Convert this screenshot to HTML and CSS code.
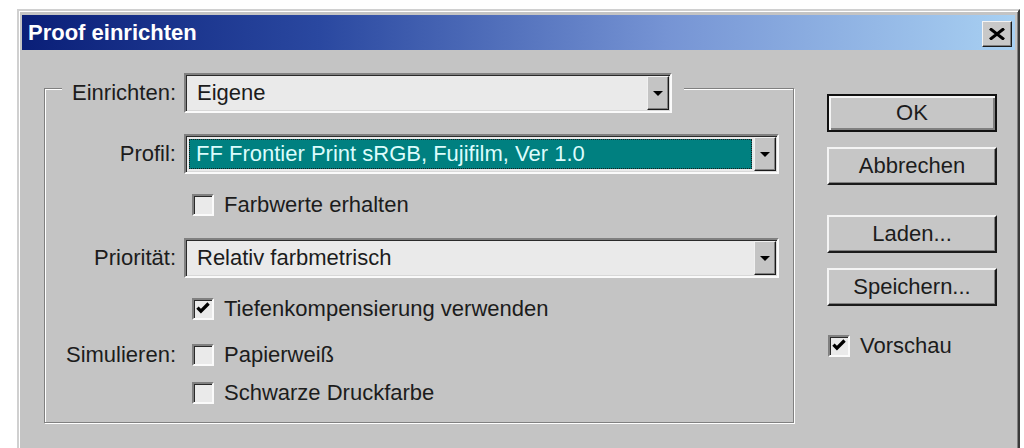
FILE: index.html
```html
<!DOCTYPE html>
<html lang="de">
<head>
<meta charset="utf-8">
<title>Proof einrichten</title>
<link rel="stylesheet" href="styles.css">
</head>
<body>
<div class="dialog">
  <div class="titlebar">
    <span class="title">Proof einrichten</span>
    <div class="close-btn">
      <svg width="18" height="12" viewBox="0 0 18 12"><path d="M2 0.5 L16 11.5 M16 0.5 L2 11.5" stroke="#000" stroke-width="3" fill="none"/></svg>
    </div>
  </div>

  <div class="dialog-body">
    <div class="group">
      <div class="group-head">
        <span class="label head-label">Einrichten:</span>
        <div class="combo combo-head">
          <div class="combo-field"><span class="combo-text">Eigene</span></div>
          <div class="combo-btn"><span class="arrow"></span></div>
        </div>
      </div>

      <div class="grid">
        <span class="label">Profil:</span>
        <div class="combo combo-wide">
          <div class="combo-field is-focused"><span class="combo-sel">FF Frontier Print sRGB, Fujifilm, Ver 1.0</span></div>
          <div class="combo-btn"><span class="arrow"></span></div>
        </div>

        <span></span>
        <div class="check-row">
          <span class="checkbox"></span>
          <span class="check-text">Farbwerte erhalten</span>
        </div>

        <span class="label">Priorität:</span>
        <div class="combo combo-wide">
          <div class="combo-field"><span class="combo-text">Relativ farbmetrisch</span></div>
          <div class="combo-btn"><span class="arrow"></span></div>
        </div>

        <span></span>
        <div class="check-row">
          <span class="checkbox">
            <svg width="18" height="18" viewBox="0 0 13 13"><path d="M2.5 5.5 L5 8 L10.5 2.5" stroke="#000" stroke-width="2.4" fill="none"/></svg>
          </span>
          <span class="check-text">Tiefenkompensierung verwenden</span>
        </div>

        <span class="label">Simulieren:</span>
        <div class="check-row">
          <span class="checkbox"></span>
          <span class="check-text">Papierweiß</span>
        </div>

        <span></span>
        <div class="check-row">
          <span class="checkbox"></span>
          <span class="check-text">Schwarze Druckfarbe</span>
        </div>
      </div>
    </div>

    <div class="side">
      <div class="stack">
        <div class="btn btn-default">OK</div>
        <div class="btn">Abbrechen</div>
      </div>
      <div class="stack">
        <div class="btn">Laden...</div>
        <div class="btn">Speichern...</div>
      </div>
      <div class="check-row side-check">
        <span class="checkbox">
          <svg width="18" height="18" viewBox="0 0 13 13"><path d="M2.5 5.5 L5 8 L10.5 2.5" stroke="#000" stroke-width="2.4" fill="none"/></svg>
        </span>
        <span class="check-text">Vorschau</span>
      </div>
    </div>
  </div>
</div>
</body>
</html>
```

FILE: styles.css
```css
html, body {
  margin: 0;
  padding: 0;
  background: #fff;
  overflow: hidden;
}

body {
  width: 1024px;
  height: 448px;
  font-family: "Liberation Sans", Arial, sans-serif;
  font-size: 22px;
  color: #1c1c1c;
}

/* window frame; its lower edge runs on past the window */
.dialog {
  box-sizing: border-box;
  margin: 9px 0 0 17px;
  width: 1003px;
  height: 439px;
  padding: 4px 3px 0 3px;
  background: #c4c4c4;
  border: 2px solid;
  border-bottom: 0;
  border-color: #d0d0d0 #3a3a3a #3a3a3a #d0d0d0;
  box-shadow: inset 1px 1px 0 #fff, inset -1px 0 0 #808080;
}

.titlebar {
  height: 35px;
  display: flex;
  align-items: center;
  justify-content: space-between;
  padding: 0 3px 0 6px;
  background: linear-gradient(to right, #0a1f78 0%, #2a48a0 30%, #7694d4 65%, #a8d0f2 100%);
}

.title {
  color: #fff;
  font-weight: bold;
  font-size: 22px;
}

.close-btn {
  box-sizing: border-box;
  width: 30px;
  height: 26px;
  margin-top: 3px;
  display: flex;
  align-items: center;
  justify-content: center;
  background: #c8c8c8;
  border: 1px solid;
  border-color: #f4f4f4 #1a1a1a #1a1a1a #f4f4f4;
  box-shadow: inset -1px -1px 0 #808080;
}

.dialog-body {
  display: flex;
  align-items: flex-start;
  padding-left: 22px;
}

/* etched group box */
.group {
  box-sizing: border-box;
  width: 750px;
  height: 335px;
  margin-top: 38px;
  border: 1px solid #808080;
  box-shadow: inset 1px 1px 0 #fff, 1px 1px 0 #fff;
}

.group-head {
  display: flex;
  align-items: center;
  width: fit-content;
  margin: -16px 0 0 17px;
  padding: 0 12px 0 8px;
  background: #c4c4c4;
}

.label {
  text-align: right;
}

.head-label {
  width: 106px;
  margin-right: 8px;
}

.grid {
  display: grid;
  grid-template-columns: 131px 595px;
  grid-template-rows: 40px 62px 44px 58px 34px 42px;
  column-gap: 8px;
  align-items: center;
  margin-top: 21px;
}

/* sunken combo box */
.combo {
  box-sizing: border-box;
  display: flex;
  height: 40px;
  border: 2px solid;
  border-color: #808080 #fafafa #fafafa #808080;
  box-shadow: inset 1px 1px 0 #2a2a2a, inset -1px -1px 0 #d8d8d8;
  padding: 1px;
}

.combo-head {
  width: 488px;
}

.combo-wide {
  width: 595px;
}

.combo-field {
  flex: 1;
  display: flex;
  align-items: center;
  background: #eaeaea;
  padding-left: 10px;
}

.combo-field.is-focused {
  padding: 2px;
}

.combo-sel {
  flex: 1;
  align-self: stretch;
  display: flex;
  align-items: center;
  padding-left: 7px;
  background: #008080;
  color: #dcfcfc;
  outline: 1px dotted #1a1a1a;
  outline-offset: -1px;
}

.combo-btn {
  box-sizing: border-box;
  width: 22px;
  display: flex;
  align-items: center;
  justify-content: center;
  background: #c4c4c4;
  border: 1px solid;
  border-color: #f0f0f0 #1a1a1a #1a1a1a #f0f0f0;
  box-shadow: inset -1px -1px 0 #808080;
}

.arrow {
  width: 0;
  height: 0;
  border-left: 5px solid transparent;
  border-right: 5px solid transparent;
  border-top: 5px solid #000;
}

/* check boxes */
.check-row {
  display: flex;
  align-items: center;
  padding-left: 8px;
}

.checkbox {
  box-sizing: border-box;
  width: 22px;
  height: 22px;
  display: flex;
  align-items: center;
  justify-content: center;
  background: #eaeaea;
  border: 2px solid;
  border-color: #808080 #fafafa #fafafa #808080;
  box-shadow: inset 1px 1px 0 #2a2a2a;
}

.check-text {
  margin-left: 10px;
}

/* button column */
.side {
  display: flex;
  flex-direction: column;
  width: 170px;
  margin: 44px 0 0 33px;
}

.stack {
  display: flex;
  flex-direction: column;
  gap: 15px;
}

.stack + .stack {
  margin-top: 30px;
}

.btn {
  box-sizing: border-box;
  height: 38px;
  display: flex;
  align-items: center;
  justify-content: center;
  background: #c6c6c6;
  border: 2px solid;
  border-color: #f4f4f4 #1a1a1a #1a1a1a #f4f4f4;
  box-shadow: inset -1px -1px 0 #808080;
}

.btn-default {
  border: 2px solid #111;
  box-shadow: inset 2px 2px 0 #f4f4f4, inset -2px -2px 0 #808080;
}

.side-check {
  margin-top: 27px;
  padding-left: 1px;
}
```
